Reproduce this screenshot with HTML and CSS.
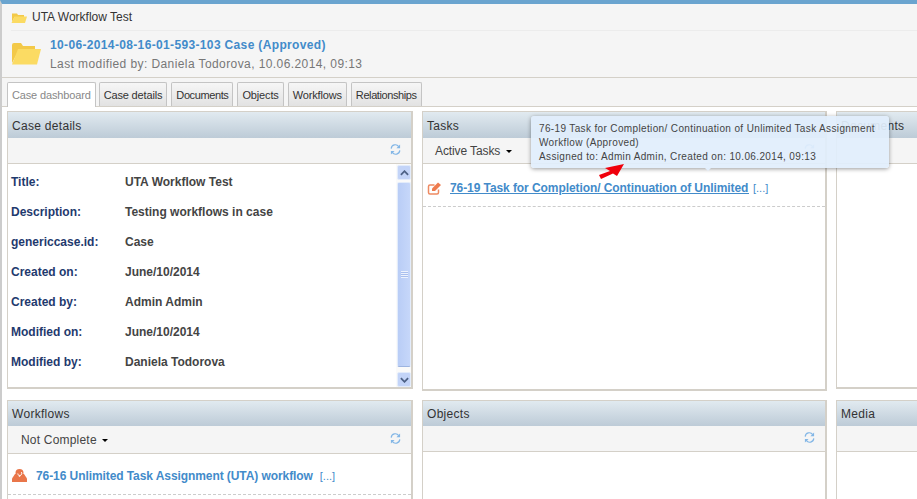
FILE: index.html
```html
<!DOCTYPE html>
<html lang="en">

<head>
    <meta charset="UTF-8">
    <title>UTA Workflow Test</title>
    <link rel="stylesheet" href="styles.css">
</head>

<body>
    <div class="page">
        <div class="head">
            <div class="crumb">
                <svg class="folder-small" viewBox="0 0 16 11">
                    <path d="M1 1.500h5l1 1.500h6v2H3.500L1 10z" fill="#f3c948" />
                    <path d="M3.500 4.500H16L14 11H0.500z" fill="#fbdb63" />
                </svg>
                <span>UTA Workflow Test</span>
            </div>
            <div class="case-title">
                <svg class="folder-big" viewBox="0 0 30 22">
                    <path d="M1 2q0-2 2-2h7l2 3h12v4H8L1 20z" fill="#f3c948" />
                    <path d="M7 6h23l-4 15.500H1z" fill="#fbdb63" />
                </svg>
                <div>
                    <a class="case-link">10-06-2014-08-16-01-593-103 Case (Approved)</a>
                    <div class="modified">Last modified by: Daniela Todorova, 10.06.2014, 09:13</div>
                </div>
            </div>
        </div>

        <div class="tabs">
            <a class="tab active">Case dashboard</a>
            <a class="tab">Case details</a>
            <a class="tab tight">Documents</a>
            <a class="tab">Objects</a>
            <a class="tab">Workflows</a>
            <a class="tab tight">Relationships</a>
        </div>

        <div class="dashboard">
            <section class="panel short-panel">
                <h3 class="panel-title">Case details</h3>
                <div class="toolbar">
                    <svg class="refresh" viewBox="0 0 12 12"><use href="#refresh-icon" /></svg>
                </div>
                <div class="panel-body with-scroll">
                    <dl class="details">
                        <dt>Title:</dt>
                        <dd>UTA Workflow Test</dd>
                        <dt>Description:</dt>
                        <dd>Testing workflows in case</dd>
                        <dt>genericcase.id:</dt>
                        <dd>Case</dd>
                        <dt>Created on:</dt>
                        <dd>June/10/2014</dd>
                        <dt>Created by:</dt>
                        <dd>Admin Admin</dd>
                        <dt>Modified on:</dt>
                        <dd>June/10/2014</dd>
                        <dt>Modified by:</dt>
                        <dd>Daniela Todorova</dd>
                    </dl>
                    <div class="scrollbar">
                        <div class="scroll-btn">
                            <svg viewBox="0 0 10 6"><path d="M1 5l4-4 4 4" /></svg>
                        </div>
                        <div class="scroll-thumb"><span class="grip"></span></div>
                        <div class="scroll-btn">
                            <svg viewBox="0 0 10 6"><path d="M1 1l4 4 4-4" /></svg>
                        </div>
                    </div>
                </div>
            </section>

            <section class="panel">
                <h3 class="panel-title">Tasks</h3>
                <div class="toolbar">
                    <span class="filter active-filter">Active Tasks <i class="caret"></i></span>
                    <svg class="refresh" viewBox="0 0 12 12"><use href="#refresh-icon" /></svg>
                </div>
                <div class="panel-body">
                    <div class="item task-item">
                        <svg class="item-icon" viewBox="0 0 14 13">
                            <path d="M11 7.500v3q0 1.500-1.500 1.500h-7Q1 12 1 10.500v-6Q1 3 2.500 3H7" fill="none" stroke="#ee8a62" stroke-width="1.500" />
                            <path d="M4.500 6.500L10.500 0.500l3 2.500-6 6H4.500z" fill="#ee7b4e" />
                        </svg>
                        <a class="task-link">76-19 Task for Completion/ Continuation of Unlimited Task</a>
                        <span class="more">[...]</span>
                    </div>
                </div>
            </section>

            <section class="panel short-panel">
                <h3 class="panel-title">Documents</h3>
                <div class="toolbar"></div>
                <div class="panel-body"></div>
            </section>

            <section class="panel">
                <h3 class="panel-title lower">Workflows</h3>
                <div class="toolbar tall-bar">
                    <span class="filter">Not Complete <i class="caret"></i></span>
                    <svg class="refresh" viewBox="0 0 12 12"><use href="#refresh-icon" /></svg>
                </div>
                <div class="panel-body">
                    <div class="item workflow-item">
                        <svg class="item-icon" viewBox="0 0 15 13">
                            <path d="M3 5L0 9.500V13h15V9.500L12 5z" fill="#e9764a" />
                            <circle cx="7.500" cy="4" r="4" fill="#e9764a" />
                            <path d="M5.800 4.500a2 2 0 1 0 3.400-1.500" fill="none" stroke="#fff" stroke-width="1" />
                            <path d="M6 6.500l1.500 1.500L9 6.500z" fill="#fff" />
                        </svg>
                        <a class="workflow-link">76-16 Unlimited Task Assignment (UTA) workflow</a>
                        <span class="more">[...]</span>
                    </div>
                </div>
            </section>

            <section class="panel">
                <h3 class="panel-title lower">Objects</h3>
                <div class="toolbar">
                    <svg class="refresh" viewBox="0 0 12 12"><use href="#refresh-icon" /></svg>
                </div>
                <div class="panel-body"></div>
            </section>

            <section class="panel">
                <h3 class="panel-title lower">Media</h3>
                <div class="toolbar"></div>
                <div class="panel-body"></div>
            </section>
        </div>

        <div class="tooltip">
            76-19 Task for Completion/ Continuation of Unlimited Task Assignment Workflow (Approved)<br>
            Assigned to: Admin Admin, Created on: 10.06.2014, 09:13
        </div>

        <svg class="red-arrow" viewBox="0 0 27 17">
            <path d="M26 1L7 5l5 3L1 12l2 4 12-5.500L19 13z" fill="#f0000c" />
        </svg>
    </div>

    <svg class="defs" width="0" height="0">
        <symbol id="refresh-icon" viewBox="0 0 12 12">
            <path d="M1.300 5A4.500 4.500 0 0 1 9.500 2.800M10.700 7A4.500 4.500 0 0 1 2.500 9.200" fill="none" stroke="#82b6e6" stroke-width="1.300" />
            <path d="M11 0.500V4.500H7zM1 11.500V7.500H5z" fill="#82b6e6" />
        </symbol>
    </svg>
</body>

</html>
```

FILE: styles.css
```css
html,
body {
    margin: 0;
    height: 100%;
    overflow: hidden;
    background: #fff;
}

body {
    font-family: "Liberation Sans", Arial, sans-serif;
    font-size: 12px;
    color: #333;
}

.page {
    position: relative;
    height: 499px;
    box-sizing: border-box;
    border-top: 4px solid #6aa4cf;
    border-left: 2px solid #ccc;
    overflow: hidden;
}

.defs {
    position: absolute;
}

/* header */
.head {
    background: #f5f5f5;
    padding: 0 0 0 9px;
    height: 73px;
    border-bottom: 1px solid #d4d0c8;
}

.crumb {
    display: flex;
    align-items: center;
    gap: 5px;
    height: 26px;
    border-bottom: 1px solid #ececec;
}

.folder-small {
    width: 16px;
    height: 11px;
}

.case-title {
    display: flex;
    gap: 9px;
    padding-top: 5px;
}

.folder-big {
    width: 30px;
    height: 22px;
    margin-top: 7px;
}

.case-link {
    display: block;
    font-weight: bold;
    font-size: 12px;
    line-height: 18px;
    letter-spacing: 0.35px;
    color: #428bca;
}

.modified {
    font-size: 12px;
    line-height: 20px;
    letter-spacing: 0.41px;
    color: #777;
}

/* tabs */
.tabs {
    display: flex;
    gap: 4px;
    padding: 4px 0 0 5px;
    height: 24px;
    background: #f5f5f5;
    border-bottom: 1px solid #d4d0c8;
}

.tab {
    display: block;
    box-sizing: border-box;
    height: 24px;
    padding: 0 4px;
    line-height: 24px;
    font-size: 11px;
    letter-spacing: -0.15px;
    color: #333;
    background: linear-gradient(#f6f6f6, #e2e2e2);
    border: 1px solid #c4c4c4;
    border-bottom: 0;
    border-radius: 2px 2px 0 0;
}

.tab.tight {
    letter-spacing: -0.4px;
}

.tab.active {
    height: 25px;
    margin-right: -1px;
    color: #888;
    background: #fff;
}

/* panels */
.dashboard {
    display: grid;
    grid-template-columns: 406px 405px 405px;
    grid-template-rows: 280px 200px;
    gap: 9px;
    padding: 4px 0 0 5px;
}

.panel {
    display: flex;
    flex-direction: column;
    box-sizing: border-box;
    border: 2px solid #d4d0c8;
    border-width: 1px 2px 2px 1px;
    min-height: 0;
}

.short-panel {
    height: 278px;
}

.panel-title {
    margin: 0;
    height: 26px;
    flex: none;
    padding-left: 4px;
    font-size: 12px;
    font-weight: normal;
    line-height: 28px;
    letter-spacing: 0.3px;
    color: #333;
    background: linear-gradient(#e1eaf0, #bdcbd7);
}

.panel-title.lower {
    height: 25px;
    line-height: 26px;
}

.toolbar {
    display: flex;
    align-items: center;
    flex: none;
    box-sizing: border-box;
    height: 26px;
    padding: 0 10px 0 12px;
    background: #f5f5f5;
    border-bottom: 1px solid #d4d0c8;
}

.tall-bar {
    height: 28px;
}

.filter {
    margin-left: 1px;
    letter-spacing: 0.2px;
    color: #444;
}

.active-filter {
    margin-left: 0;
    letter-spacing: -0.1px;
}

.caret {
    display: inline-block;
    margin-left: 2px;
    vertical-align: middle;
    border-top: 3px solid #000;
    border-left: 3.5px solid transparent;
    border-right: 3.5px solid transparent;
}

.refresh {
    width: 11px;
    height: 11px;
    margin-left: auto;
    margin-bottom: 2px;
}

.panel-body {
    flex: 1;
    min-height: 0;
    background: #fff;
}

.with-scroll {
    display: flex;
}

/* details list */
.details {
    flex: 1;
    display: grid;
    grid-template-columns: 114px 1fr;
    grid-auto-rows: 30px;
    align-content: start;
    align-items: center;
    margin: 3px 0 0 3px;
    font-weight: bold;
}

.details dt {
    color: #1f3a6e;
}

.details dd {
    margin: 0;
    color: #444;
}

/* fake scrollbar */
.scrollbar {
    display: flex;
    flex-direction: column;
    flex: none;
    width: 15px;
    padding: 1px 0 0 1px;
    box-sizing: border-box;
    background: #fafafa;
}

.scroll-btn {
    display: flex;
    align-items: center;
    justify-content: center;
    height: 15px;
    flex: none;
    box-sizing: border-box;
    background: #c3d4f8;
    border: 1px solid #e3ecfb;
    border-radius: 2px;
}

.scroll-btn svg {
    width: 9px;
    height: 6px;
}

.scroll-btn path {
    fill: none;
    stroke: #4d6185;
    stroke-width: 2;
}

.scroll-thumb {
    flex: 1;
    display: flex;
    align-items: center;
    justify-content: center;
    margin: 2px 0 5px;
    background: linear-gradient(90deg, #b9cdf6, #c6d7fa);
    border: 1px solid #e3ecfb;
    border-bottom-color: #9db4e0;
    border-radius: 2px;
}

.grip {
    width: 7px;
    height: 7px;
    background: repeating-linear-gradient(#eef3fd 0 1px, #a9bfee 1px 2px);
}

/* list items */
.item {
    display: flex;
    align-items: center;
    padding-left: 4px;
    border-bottom: 1px dashed #ccc;
    white-space: nowrap;
}

.task-item {
    height: 36px;
    padding-top: 6px;
}

.workflow-item {
    height: 37px;
    padding-top: 3px;
}

.item-icon {
    flex: none;
    width: 15px;
    height: 13px;
}

.task-link {
    display: block;
    width: 299px;
    margin-left: 8px;
    overflow: hidden;
    font-weight: bold;
    letter-spacing: -0.08px;
    color: #428bca;
    text-decoration: underline;
}

.workflow-link {
    margin-left: 9px;
    font-weight: bold;
    letter-spacing: -0.08px;
    color: #428bca;
}

.more {
    margin-left: 4px;
    font-size: 11px;
    color: #428bca;
}

.workflow-item .more {
    margin-left: 7px;
}

/* over the content */
.tooltip {
    position: absolute;
    left: 529px;
    top: 112px;
    box-sizing: border-box;
    width: 358px;
    height: 52px;
    padding: 6px 8px;
    font-size: 10px;
    line-height: 14px;
    letter-spacing: 0.36px;
    color: #444;
    background: rgba(225, 238, 252, 0.93);
    border-radius: 3px;
    box-shadow: 0 1px 4px rgba(0, 0, 0, 0.4);
}

.tooltip::after {
    content: "";
    position: absolute;
    left: 174px;
    bottom: -3px;
    border-top: 3px solid #e1eefc;
    border-left: 3px solid transparent;
    border-right: 3px solid transparent;
}

.red-arrow {
    position: absolute;
    left: 596px;
    top: 159px;
    width: 27px;
    height: 17px;
}
```
